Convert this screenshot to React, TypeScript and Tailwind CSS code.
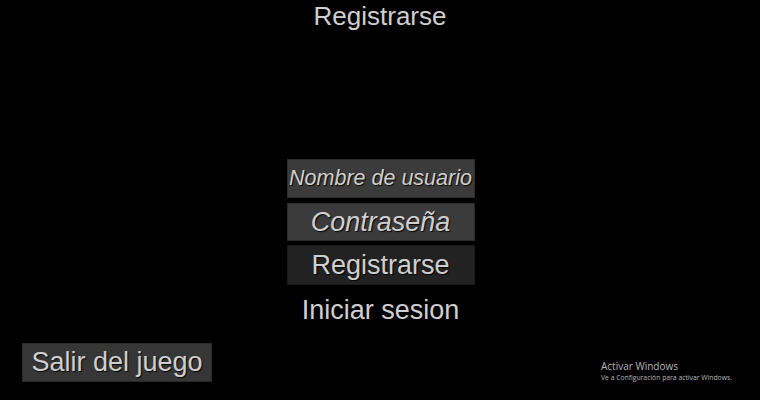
const textCls =
  "text-[#cfcfcf] [text-shadow:1px_1px_1px_rgba(0,0,0,0.9)] [font-family:'Liberation_Sans',Arial,sans-serif]";

const App: React.FC = () => {
  return (
    <div className="relative w-full h-[400px] bg-black flex flex-col items-center overflow-hidden">
      {/* Title */}
      <div className={`h-[32px] flex items-center text-[26px] ${textCls}`}>Registrarse</div>

      {/* Form */}
      <div className="mt-[127px] w-[188px] flex flex-col ml-[1px]">
        <div
          className={`h-[39px] bg-[#3b3b3b] border border-[#2c2c2c] flex items-center justify-center italic text-[21.5px] tracking-[0px] ${textCls}`}
        >
          Nombre de usuario
        </div>
        <div
          className={`mt-[5px] h-[38px] bg-[#3b3b3b] border border-[#2c2c2c] flex items-center justify-center italic text-[27px] ${textCls}`}
        >
          Contraseña
        </div>
        <div
          className={`mt-[4px] h-[40px] bg-[#222222] border border-[#1a1a1a] flex items-center justify-center text-[27px] ${textCls}`}
        >
          Registrarse
        </div>
        <div className={`h-[50px] flex items-center justify-center text-[27px] ${textCls}`}>
          Iniciar sesion
        </div>
      </div>

      {/* Exit button */}
      <div className="self-start ml-[22px] mt-[8px]">
        <div
          className={`w-[190px] h-[39px] bg-[#363636] border border-[#2a2a2a] flex items-center justify-center text-[27px] ${textCls}`}
        >
          Salir del juego
        </div>
      </div>

      {/* Windows watermark */}
      <div className="absolute left-[601px] top-[361px] text-[#b5b5b5] [font-family:'Open_Sans',sans-serif] leading-none">
        <div className="text-[10px]">Activar Windows</div>
        <div className="text-[6.8px] mt-[4px] whitespace-nowrap">Ve a Configuración para activar Windows.</div>
      </div>
    </div>
  );
};

export default App;
